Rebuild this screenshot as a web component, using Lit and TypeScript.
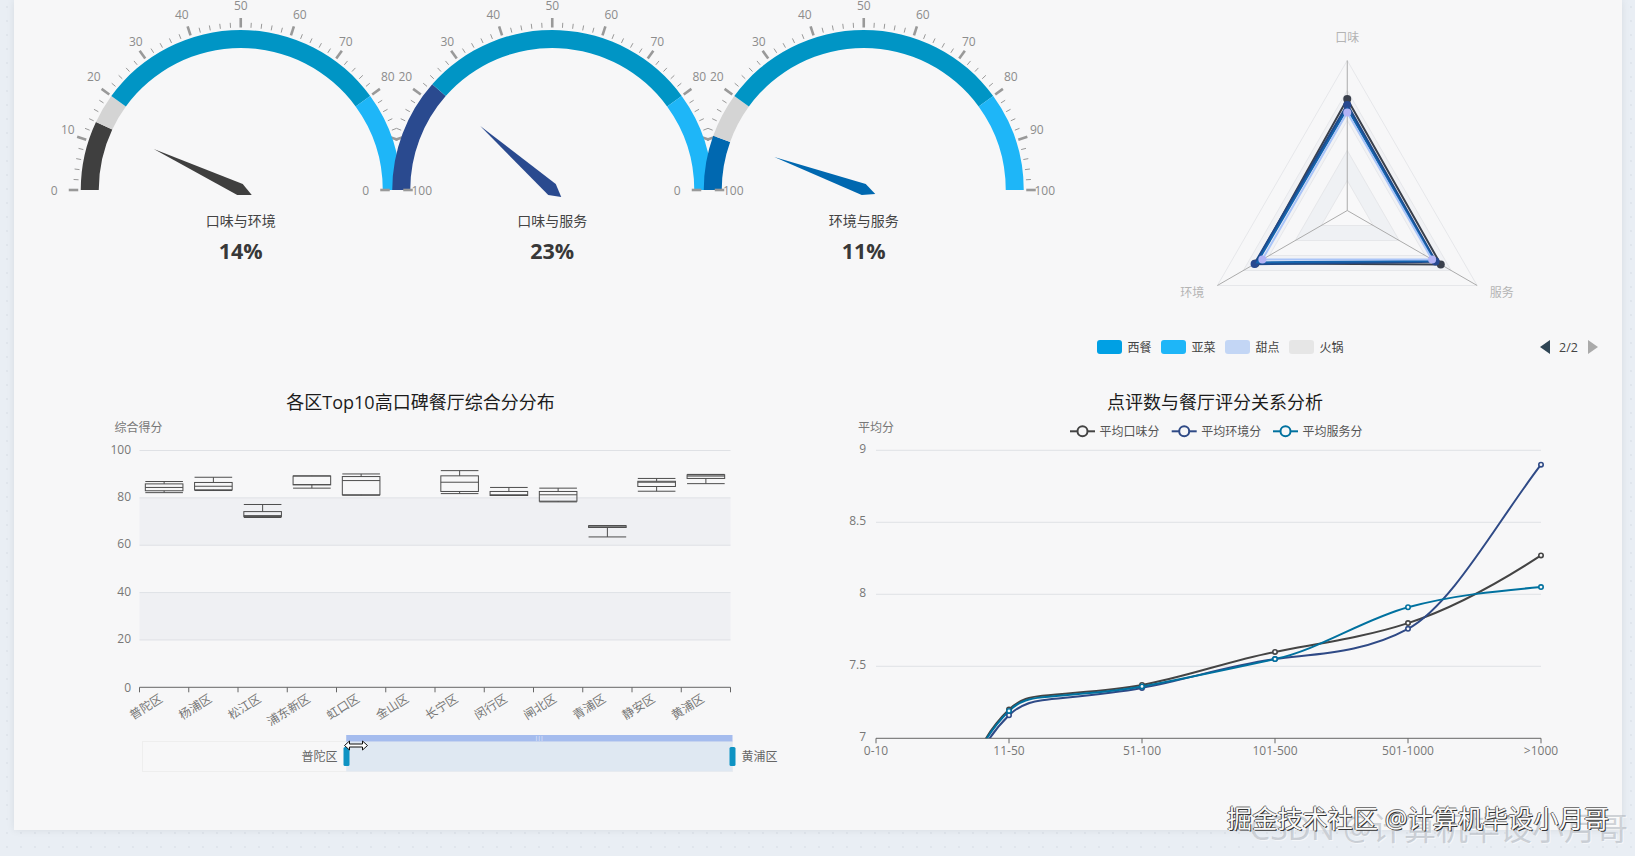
import { LitElement, html, svg, css } from "lit";
import { customElement } from "lit/decorators.js";

const shared = css`
  :host {
    display: block;
    font-family: "Open Sans", "Noto Sans CJK SC", sans-serif;
  }
  svg {
    display: block;
    overflow: visible;
  }
  text {
    font-size: 12px;
    fill: #777;
  }
  .mid {
    text-anchor: middle;
    dominant-baseline: central;
  }
  .end {
    text-anchor: end;
    dominant-baseline: central;
  }
  .start {
    text-anchor: start;
    dominant-baseline: central;
  }
  .title {
    font-size: 18px;
    fill: #1c1c1c;
  }
`;

const DARK = "#3f3f3f";
const NAVY = "#2a4a8f";
const BLUE = "#0068b0";
const GREY = "#d4d4d4";
const TEAL = "#0095c5";
const SKY = "#1eb6f8";

interface Gauge {
  name: string;
  cx: number;
  value: number;
  bands: [number, string][];
  pointer: string;
  color: string;
}

const gauges: Gauge[] = [
  {
    name: "口味与环境",
    cx: 241,
    value: 14,
    color: DARK,
    bands: [[14, DARK], [20, GREY], [80, TEAL], [100, SKY]],
    pointer: "-87,-41 2,-6 11,5 -3.5,5",
  },
  {
    name: "口味与服务",
    cx: 552.5,
    value: 23,
    color: NAVY,
    bands: [[23, NAVY], [80, TEAL], [100, SKY]],
    pointer: "-72,-64 3.5,-6 9,7 -4,5",
  },
  {
    name: "环境与服务",
    cx: 864,
    value: 11,
    color: BLUE,
    bands: [[11, BLUE], [20, GREY], [80, TEAL], [100, SKY]],
    pointer: "-89.5,-33 2,-6 11.5,4 -2,5",
  },
];

const GAUGE_BASE = 190;

// label offsets from the gauge centre, left half mirrored onto the right
const labelSpots: [number, number][] = [
  [-186.5, 0],
  [-173, -60.5],
  [-147, -113.7],
  [-105, -149],
  [-59, -176],
  [0, -185],
  [59, -176],
  [105, -149],
  [147, -113.7],
  [173, -60.5],
  [181, 0],
];

const polar = (cx: number, v: number, r: number) => {
  const a = Math.PI * (1 - v / 100);
  return [cx + r * Math.cos(a), GAUGE_BASE - r * Math.sin(a)];
};

@customElement("gauge-row")
class GaugeRow extends LitElement {
  static styles = [
    shared,
    css`
      :host {
        width: 934.5px;
        height: 372px;
        flex: none;
      }
      .tick {
        stroke: #999;
      }
      .gauge-name {
        font-size: 14px;
        fill: #444;
      }
      .gauge-value {
        font-size: 21.5px;
        font-weight: 700;
        fill: #383838;
      }
      .scale {
        fill: #8c8c8c;
      }
    `,
  ];

  tick(cx: number, v: number) {
    const major = v % 10 === 0;
    const [x1, y1] = polar(cx, v, 162.5);
    const [x2, y2] = polar(cx, v, major ? 172 : 167.5);
    return svg`<line class="tick" x1=${x1} y1=${y1} x2=${x2} y2=${y2} stroke-width=${major ? 2.6 : 1}/>`;
  }

  band(cx: number, from: number, to: number, color: string) {
    const [x1, y1] = polar(cx, from, 160);
    const [x2, y2] = polar(cx, to, 160);
    const [x3, y3] = polar(cx, to, 142);
    const [x4, y4] = polar(cx, from, 142);
    return svg`<path fill=${color} d="M${x1} ${y1}A160 160 0 0 1 ${x2} ${y2}L${x3} ${y3}A142 142 0 0 0 ${x4} ${y4}Z"/>`;
  }

  // scales sit under every arc, the gauges overlap each other
  scale(g: Gauge) {
    const ticks = [];
    for (let v = 2; v < 100; v += 2) ticks.push(this.tick(g.cx, v));
    return svg`${ticks}${labelSpots.map(
      ([dx, dy], i) => svg`<text class="mid scale" x=${g.cx + dx} y=${GAUGE_BASE + dy}>${i * 10}</text>`
    )}`;
  }

  arcs(g: Gauge) {
    let from = 0;
    return g.bands.map(([to, color]) => {
      const p = this.band(g.cx, from, to, color);
      from = to;
      return p;
    });
  }

  render() {
    return html`<svg width="934.5" height="372" viewBox="85.25 0 934.5 372">
      ${gauges.map((g) => this.scale(g))}
      ${gauges.map((g) => this.arcs(g))}
      ${gauges.map(
        (g) => svg`
          ${this.tick(g.cx, 0)}${this.tick(g.cx, 100)}
          <polygon points=${g.pointer} transform="translate(${g.cx} ${GAUGE_BASE})" fill=${g.color}></polygon>
          <text class="mid gauge-name" x=${g.cx} y="220">${g.name}</text>
          <text class="mid gauge-value" x=${g.cx} y="250">${g.value}%</text>`
      )}
    </svg>`;
  }
}

const RADAR_CX = 1347;
const RADAR_CY = 210.5;
const radarPt = (axis: number, r: number) => {
  const a = -Math.PI / 2 + (axis * 2 * Math.PI) / 3;
  return [RADAR_CX + r * Math.cos(a), RADAR_CY + r * Math.sin(a)];
};
const tri = (a: number, b = a, c = a) =>
  [radarPt(0, a), radarPt(1, b), radarPt(2, c)].map((p) => p.join(",")).join(" ");

// r: top, right, left
const radarSeries = [
  { color: "#3a404c", dotColor: "#3a404c", r: [111.5, 108, 106], w: 2, dot: 4 },
  { color: "#1f4a8a", dotColor: "#27488f", r: [105.5, 102, 107], w: 2.6, dot: 4 },
  { color: "#1463ad", dotColor: "", r: [102, 100.5, 104], w: 2, dot: 0 },
  { color: "#a9c4f8", dotColor: "#b3b3f5", r: [98, 98, 98], w: 2, dot: 4 },
];

const legend = [
  { name: "西餐", color: "#00a0e4" },
  { name: "亚菜", color: "#1eb6f8" },
  { name: "甜点", color: "#c3d6f5" },
  { name: "火锅", color: "#e6e6e6" },
];

@customElement("radar-chart")
class RadarChart extends LitElement {
  static styles = [
    shared,
    css`
      :host {
        flex: 1;
      }
      .axis-name {
        fill: #b4b4b4;
      }
      .legend {
        display: flex;
        align-items: center;
        gap: 9.5px;
        height: 20px;
        margin-top: 2px;
        padding: 0 24.5px 0 77.25px;
        font-size: 12px;
        color: #444;
      }
      .item {
        display: flex;
        align-items: center;
        gap: 5.5px;
      }
      .swatch {
        width: 25px;
        height: 14px;
        border-radius: 3px;
      }
      .pager {
        margin-left: auto;
        display: flex;
        align-items: center;
        gap: 9.5px;
        font-size: 12.5px;
      }
      .prev {
        border-style: solid;
        border-width: 7px 10px 7px 0;
        border-color: transparent #2f4554 transparent transparent;
      }
      .next {
        border-style: solid;
        border-width: 7px 0 7px 10px;
        border-color: transparent transparent transparent #aaa;
      }
    `,
  ];

  render() {
    const rings = [150, 120, 90, 60, 30];
    const fills = ["#f7f7f8", "#f1f2f5", "#f7f7f8", "#eff1f4", "#f8f8f9"];
    return html`<svg width="602.25" height="335" viewBox="1019.75 0 602.25 335">
        ${rings.map(
          (r, i) => svg`<polygon points=${tri(r)} fill=${fills[i]} stroke="#e6e7ea"></polygon>`
        )}
        ${[0, 1, 2].map((a) => {
          const [x, y] = radarPt(a, 150);
          return svg`<line x1=${RADAR_CX} y1=${RADAR_CY} x2=${x} y2=${y} stroke="#ababab"/>`;
        })}
        ${radarSeries.map(
          (s) => svg`
            <polygon points=${tri(s.r[0], s.r[1], s.r[2])} fill="none" stroke=${s.color} stroke-width=${s.w}></polygon>
            ${s.dot
              ? s.r.map((r, a) => {
                  const [x, y] = radarPt(a, r);
                  return svg`<circle cx=${x} cy=${y} r=${s.dot} fill=${s.dotColor}/>`;
                })
              : null}`
        )}
        <text class="mid axis-name" x="1347" y="37">口味</text>
        <text class="mid axis-name" x="1192" y="292">环境</text>
        <text class="mid axis-name" x="1501.5" y="292">服务</text>
      </svg>
      <div class="legend">
        ${legend.map(
          (l) => html`<div class="item">
            <span class="swatch" style="background:${l.color}"></span>${l.name}
          </div>`
        )}
        <div class="pager"><span class="prev"></span>2/2<span class="next"></span></div>
      </div>`;
  }
}

// [whisker high, q3, median, q1, whisker low]
const boxes: { name: string; v?: number[] }[] = [
  { name: "普陀区", v: [86.9, 85.9, 84.4, 83, 82.2] },
  { name: "杨浦区", v: [88.7, 86.5, 84.9, 83.4, 83.1] },
  { name: "松江区", v: [77.2, 74.2, 72.5, 72.1, 71.7] },
  { name: "浦东新区", v: [89.3, 89.2, 85.6, 85.5, 84.1] },
  { name: "虹口区", v: [90.1, 89, 87.3, 81.3, 81.1] },
  { name: "金山区" },
  { name: "长宁区", v: [91.5, 89.3, 86.6, 82.7, 81.8] },
  { name: "闵行区", v: [84.4, 82.7, 81.3, 81, 81] },
  { name: "闸北区", v: [84.1, 82.7, 81.3, 78.6, 78.3] },
  { name: "青浦区", v: [68.3, 68.2, 67.7, 67.5, 63.5] },
  { name: "静安区", v: [88.2, 87, 86.6, 84.8, 82.8] },
  { name: "黄浦区", v: [89.9, 89.7, 89.2, 88.2, 86] },
];

const BX0 = 139;
const BX1 = 730;
const BY0 = 687.3;
const BY100 = 450.5;
const by = (v: number) => BY0 - ((BY0 - BY100) * v) / 100;

@customElement("box-chart")
class BoxChart extends LitElement {
  static styles = [
    shared,
    css`
      :host {
        width: 786.5px;
        flex: none;
      }
      .box {
        stroke: #4d4d4d;
        stroke-width: 1;
        fill: none;
      }
      .grip {
        fill: #fff;
        font-size: 5px;
      }
      .side {
        fill: #666;
      }
    `,
  ];

  render() {
    const step = (BX1 - BX0) / 12;
    const bands = [
      [80, 60],
      [40, 20],
    ];
    return html`<svg width="786.5" height="458" viewBox="13.5 372 786.5 458">
      <text class="mid title" x="420" y="402">各区Top10高口碑餐厅综合分分布</text>
      <text class="mid" x="138" y="427.5">综合得分</text>
      ${bands.map(
        ([a, b]) => svg`<rect x=${BX0} y=${by(a)} width=${BX1 - BX0} height=${by(b) - by(a)} fill="#eff0f3"/>`
      )}
      ${[0, 20, 40, 60, 80, 100].map(
        (v) => svg`
          ${v ? svg`<line x1=${BX0} x2=${BX1} y1=${by(v)} y2=${by(v)} stroke="#dfe1e5"/>` : null}
          <text class="end" x="130.5" y=${by(v) - (v ? 1.5 : 0)}>${v}</text>`
      )}
      <line x1=${BX0} x2=${BX1} y1=${BY0} y2=${BY0} stroke="#666"/>
      ${Array.from({ length: 13 }, (_, i) => {
        const x = BX0 + i * step;
        return svg`<line x1=${x} x2=${x} y1=${BY0} y2=${BY0 + 5} stroke="#666"/>`;
      })}
      ${boxes.map((b, i) => {
        const cx = BX0 + (i + 0.5) * step;
        const hw = 18.8;
        const label = svg`<text class="end" x=${cx - 3} y="697" transform="rotate(-32 ${cx - 3} 697)">${b.name}</text>`;
        if (!b.v) return label;
        const [hi, q3, med, q1, lo] = b.v.map(by);
        return svg`${label}
          <path class="box" d="M${cx - hw} ${hi}H${cx + hw}M${cx} ${hi}V${q3}M${cx} ${q1}V${lo}M${cx - hw} ${lo}H${cx + hw}M${cx - hw} ${med}H${cx + hw}"/>
          <rect class="box" x=${cx - hw} y=${q3} width=${hw * 2} height=${q1 - q3}/>`;
      })}

      <rect x="142" y="741.5" width="590" height="30" fill="none" stroke="#eeeeee"/>
      <rect x="345.7" y="741.5" width="386.3" height="30" fill="#dfe8f2"/>
      <rect x="345.7" y="735" width="386.3" height="6.5" fill="#a5bcee"/>
      <text class="mid grip" x="538.6" y="738">|||</text>
      <rect x="343" y="747" width="6" height="19" rx="1.5" fill="#0f93c3"/>
      <rect x="729" y="747" width="6" height="19" rx="1.5" fill="#0f93c3"/>
      <text class="end side" x="337" y="756">普陀区</text>
      <text class="start side" x="741" y="756">黄浦区</text>
      <path d="M344 745.5l5-4.5v3h13v-3l5 4.5-5 4.5v-3h-13v3z" fill="#fff" stroke="#111"/>
    </svg>`;
  }
}

// [x in category units, value, slope per category]
type Knot = [number, number, number];
const lines: { name: string; color: string; vals: number[]; knots: Knot[] }[] = [
  {
    name: "平均口味分",
    color: "#444444",
    vals: [7.2, 7.37, 7.6, 7.8, 8.27],
    knots: [[0.6, 6.4, 4], [1, 7.2, 0.9], [1.25, 7.295, 0.1], [2, 7.37, 0.17], [3, 7.6, 0.18], [4, 7.8, 0.3], [5, 8.27, 0.6]],
  },
  {
    name: "平均环境分",
    color: "#2f4a86",
    vals: [7.16, 7.35, 7.55, 7.76, 8.9],
    knots: [[0.6, 6.36, 4], [1, 7.16, 0.9], [1.25, 7.265, 0.1], [2, 7.35, 0.17], [3, 7.55, 0.12], [4, 7.76, 0.5], [5, 8.9, 1.2]],
  },
  {
    name: "平均服务分",
    color: "#00719f",
    vals: [7.19, 7.36, 7.55, 7.91, 8.05],
    knots: [[0.6, 6.39, 4], [1, 7.19, 0.9], [1.25, 7.285, 0.1], [2, 7.36, 0.17], [3, 7.55, 0.2], [4, 7.91, 0.25], [5, 8.05, 0.08]],
  },
];

const LX0 = 876;
const LSTEP = 133;
const lx = (i: number) => LX0 + i * LSTEP;
const ly = (v: number) => 738.3 - (v - 7) * 144;

const curve = (knots: Knot[]) => {
  let d = `M${lx(knots[0][0])} ${ly(knots[0][1])}`;
  for (let i = 1; i < knots.length; i++) {
    const [x0, v0, m0] = knots[i - 1];
    const [x1, v1, m1] = knots[i];
    const h = (x1 - x0) / 3;
    d += `C${lx(x0 + h)} ${ly(v0 + m0 * h)} ${lx(x1 - h)} ${ly(v1 - m1 * h)} ${lx(x1)} ${ly(v1)}`;
  }
  return d;
};

@customElement("line-chart")
class LineChart extends LitElement {
  static styles = [
    shared,
    css`
      :host {
        flex: 1;
      }
      .key {
        fill: #555;
      }
    `,
  ];

  render() {
    const cats = ["0-10", "11-50", "51-100", "101-500", "501-1000", ">1000"];
    const legendX = [1070, 1171.7, 1273];
    return html`<svg width="822" height="458" viewBox="800 372 822 458">
      <defs>
        <clipPath id="plot"><rect x="876" y="440" width="680" height="298.3"></rect></clipPath>
      </defs>
      <text class="mid title" x="1215" y="402">点评数与餐厅评分关系分析</text>
      <text class="mid" x="876" y="427.5">平均分</text>
      ${lines.map((l, i) => {
        const x = legendX[i];
        return svg`
          <line x1=${x} x2=${x + 25} y1="431.3" y2="431.3" stroke=${l.color} stroke-width="2"/>
          <circle cx=${x + 12.5} cy="431.3" r="5" fill="#f7f7f8" stroke=${l.color} stroke-width="2"/>
          <text class="start key" x=${x + 29.5} y="431">${l.name}</text>`;
      })}
      ${[7.5, 8, 8.5, 9].map(
        (v) => svg`<line x1=${LX0} x2="1541" y1=${ly(v)} y2=${ly(v)} stroke="#dfe1e5"/>`
      )}
      ${[7, 7.5, 8, 8.5, 9].map((v) => svg`<text class="end" x="866" y=${ly(v) - 1.5}>${v}</text>`)}
      <line x1=${LX0} x2="1541" y1="738.3" y2="738.3" stroke="#666"/>
      ${cats.map(
        (c, i) => svg`
          <line x1=${lx(i)} x2=${lx(i)} y1="738.3" y2="743.3" stroke="#666"/>
          <text class="mid" x=${lx(i)} y="750.5">${c}</text>`
      )}
      <g clip-path="url(#plot)">
        ${lines.map((l) => svg`<path d=${curve(l.knots)} fill="none" stroke=${l.color} stroke-width="2"/>`)}
      </g>
      ${lines.map((l) =>
        l.vals.map(
          (v, i) => svg`<circle cx=${lx(i + 1)} cy=${ly(v)} r="2.2" fill="#f7f7f8" stroke=${l.color} stroke-width="1.6"/>`
        )
      )}
    </svg>`;
  }
}

@customElement("app-root")
class AppRoot extends LitElement {
  static styles = [
    shared,
    css`
      :host {
        position: relative;
        width: 1635px;
        height: 856px;
        overflow: hidden;
        background: radial-gradient(#dde3ea 0.6px, transparent 1px) 0 0 / 14px 14px, #e9eef4;
      }
      .card {
        margin-left: 13.5px;
        width: 1608.5px;
        height: 830px;
        background: #f7f7f8;
        box-shadow: 0 0 8px rgba(0, 0, 0, 0.08);
        display: grid;
        grid-template-rows: 372px 458px;
      }
      .top {
        display: flex;
        padding-left: 71.75px;
      }
      .bottom {
        display: flex;
      }
      .mark {
        position: absolute;
        white-space: nowrap;
        line-height: 1;
      }
      .csdn {
        left: 1250px;
        top: 812px;
        font-size: 32px;
        color: rgba(170, 176, 184, 0.55);
        text-shadow: 1px 1px 0 rgba(255, 255, 255, 0.5);
      }
      .juejin {
        left: 1227px;
        top: 806px;
        font-size: 25px;
        letter-spacing: 0.2px;
        color: #fafafa;
        text-shadow: 1px 1px 0 #333, -1px 0 0 #555, 0 -1px 0 #777;
      }
    `,
  ];

  render() {
    return html`<div class="card">
        <div class="top">
          <gauge-row></gauge-row>
          <radar-chart></radar-chart>
        </div>
        <div class="bottom">
          <box-chart></box-chart>
          <line-chart></line-chart>
        </div>
      </div>
      <div class="mark csdn">CSDN @计算机毕设小月哥</div>
      <div class="mark juejin">掘金技术社区 @计算机毕设小月哥</div>`;
  }
}
